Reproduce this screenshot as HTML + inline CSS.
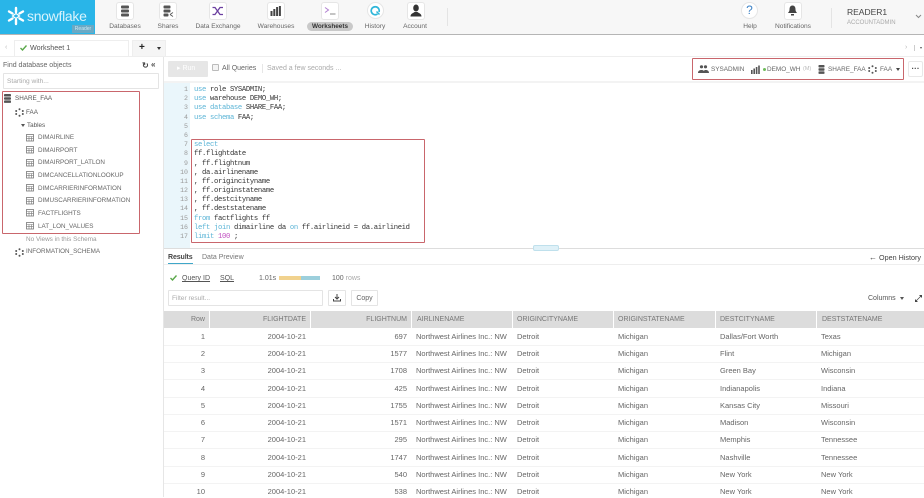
<!DOCTYPE html>
<html><head><meta charset="utf-8">
<style>
*{box-sizing:border-box}
html,body{margin:0;padding:0}
body{width:924px;height:497px;overflow:hidden;position:relative;background:#fff;font-family:"Liberation Sans",sans-serif;color:#555;font-size:7px;filter:blur(.3px)}
.a{position:absolute;white-space:nowrap}
.ico{position:absolute;top:2px;width:18px;height:18px;background:#fff;border-radius:3px;border:1px solid #e6e6e6}
.nl{position:absolute;top:22px;height:9px;line-height:9px;font-size:6.6px;color:#666;text-align:center;white-space:nowrap}
.tr{font-size:6.3px;color:#666;line-height:10px;height:10px}
.code{font-family:"Liberation Mono",monospace;font-size:7.2px;letter-spacing:-.32px;line-height:9.19px;color:#333;white-space:pre}
.k{color:#5bb4d6}
.ln{position:absolute;left:165px;width:23px;text-align:right;font-family:"Liberation Mono",monospace;font-size:6.6px;color:#999;line-height:9.19px}
.cell{position:absolute;font-size:7.5px;color:#666;height:12px;line-height:12px;white-space:nowrap;margin-top:1px}
.hd{position:absolute;top:311px;height:17px;line-height:18px;background:#dcdcdc;font-size:7px;color:#777;padding:0 4px}
.row{position:absolute;left:164px;width:760px;height:1px;background:#f3f3f3}
.red{position:absolute;border:1.5px solid #c9666c;border-radius:1px}
</style></head><body>

<!-- top bar -->
<div class="a" style="left:0;top:0;width:924px;height:35px;background:#f7f7f7;border-bottom:1px solid #b5b5b5"></div>
<div class="a" style="left:0;top:0;width:95px;height:34px;background:#29b5e8"></div>
<svg class="a" style="left:6px;top:6px" width="20" height="20" viewBox="0 0 20 20" stroke="#fff" stroke-width="2.4" stroke-linecap="round" fill="none"><path d="M10 2v4M10 14v4M3 5.5l3.5 2M13.5 12.5l3.5 2M3 14.5l3.5-2M13.5 7.500l3.500-2"/><path d="M6.500 10l3.500-2.500 3.500 2.500-3.500 2.500z" stroke-width="1.200"/></svg>
<div class="a" style="left:27px;top:7px;font-size:14px;letter-spacing:-.3px;line-height:18px;color:#d8f3fc">snowflake</div>
<div class="a" style="left:72px;top:25px;width:22px;height:8px;background:#6aa9c4;color:#cfe8f2;font-size:5px;line-height:8px;text-align:center">Reader</div>

<div class="ico" style="left:116px"></div>
<svg class="a" style="left:120px;top:5px" width="10" height="12" viewBox="0 0 10 12" fill="#555"><rect x="1" y="0.500" width="8" height="3" rx="1"/><rect x="1" y="4.500" width="8" height="3" rx="1"/><rect x="1" y="8.500" width="8" height="3" rx="1"/></svg>
<div class="nl" style="left:105px;width:40px">Databases</div>

<div class="ico" style="left:159px"></div>
<svg class="a" style="left:163px;top:5px" width="11" height="12" viewBox="0 0 11 12" fill="#555"><rect x="0.500" y="0.500" width="7" height="3" rx="1"/><rect x="0.500" y="4.500" width="7" height="3" rx="1"/><rect x="0.500" y="8.500" width="5" height="3" rx="1"/><path d="M7 9.500l3-2M7 9.500l3 2" stroke="#555" stroke-width=".8" fill="none"/></svg>
<div class="nl" style="left:148px;width:40px">Shares</div>

<div class="ico" style="left:209px"></div>
<svg class="a" style="left:212px;top:5px" width="12" height="12" viewBox="0 0 12 12" fill="none" stroke="#6b3fa0" stroke-width="1.300"><path d="M0.500 2.500h2.500l5 7h3M0.500 9.500h2.500l5-7h3"/></svg>
<div class="nl" style="left:188px;width:60px">Data Exchange</div>

<div class="ico" style="left:267px"></div>
<svg class="a" style="left:270px;top:5px" width="12" height="12" viewBox="0 0 12 12" fill="#444"><rect x="0.500" y="6" width="2" height="5"/><rect x="3.300" y="4" width="2" height="7"/><rect x="6.100" y="2" width="2" height="9"/><rect x="8.900" y="1" width="2" height="10"/></svg>
<div class="nl" style="left:250px;width:52px">Warehouses</div>

<div class="ico" style="left:321px"></div>
<svg class="a" style="left:324px;top:6px" width="13" height="11" viewBox="0 0 13 11" fill="none" stroke="#b07fd0" stroke-width="1"><path d="M1 1.500l3.500 2.500-3.500 2.500"/><path d="M6 8h5.500" stroke="#888"/></svg>
<div class="a" style="left:307px;top:22px;width:46px;height:9px;background:#c9c9c9;border-radius:5px"></div>
<div class="nl" style="left:307px;width:46px;color:#333;font-weight:bold;font-size:6.400px">Worksheets</div>

<div class="a" style="left:367px;top:2px;width:17px;height:17px;background:#fff;border:1px solid #e6e6e6;border-radius:50%"></div>
<svg class="a" style="left:370px;top:5px" width="11" height="11" viewBox="0 0 11 11" fill="none" stroke="#2fb6d9" stroke-width="1.700"><path d="M7.500 9a4 4 0 1 1 1.500-2"/><path d="M6.500 6.500l3 3" stroke-width="1.500"/></svg>
<div class="nl" style="left:355px;width:40px">History</div>

<div class="ico" style="left:407px"></div>
<svg class="a" style="left:410px;top:4px" width="12" height="13" viewBox="0 0 12 13" fill="#333"><ellipse cx="6" cy="4" rx="2.800" ry="3.500"/><path d="M0.500 12.500c0-3 3-3.500 4-4.500h3c1 1 4 1.500 4 4.500z"/></svg>
<div class="nl" style="left:395px;width:40px">Account</div>

<div class="a" style="left:447px;top:8px;width:1px;height:18px;background:#e4e4e4"></div>

<div class="a" style="left:741px;top:2px;width:17px;height:17px;background:#fff;border:1px solid #e6e6e6;border-radius:50%;color:#3f83c6;font-size:12px;line-height:15px;text-align:center">?</div>
<div class="nl" style="left:730px;width:40px">Help</div>
<div class="ico" style="left:784px"></div>
<svg class="a" style="left:787px;top:5px" width="11" height="11" viewBox="0 0 11 11" fill="#444"><path d="M5.500 0.500c-2 0-3 1.500-3 4 0 2-1 2.500-1.500 3.500h9c-.5-1-1.500-1.500-1.500-3.500 0-2.500-1-4-3-4z"/><rect x="4" y="9" width="3" height="1.500"/></svg>
<div class="nl" style="left:770px;width:46px">Notifications</div>
<div class="a" style="left:831px;top:8px;width:1px;height:20px;background:#e4e4e4"></div>
<div class="a" style="left:847px;top:7px;font-size:8.500px;line-height:11px;color:#444">READER1</div>
<div class="a" style="left:847px;top:19px;font-size:6px;line-height:8px;color:#aaa">ACCOUNTADMIN</div>
<svg class="a" style="left:915px;top:14px" width="7" height="5" viewBox="0 0 7 5" fill="none" stroke="#888" stroke-width="1"><path d="M1 1l2.500 2.500L6 1"/></svg>

<!-- tabs -->
<div class="a" style="left:5px;top:44px;font-size:7px;color:#bbb">‹</div>
<div class="a" style="left:14px;top:40px;width:115px;height:17px;background:#fff;border:1px solid #eee;border-bottom:0"></div>
<svg class="a" style="left:20px;top:45px" width="7" height="6" viewBox="0 0 7 6" fill="none" stroke="#5aa84a" stroke-width="1.400"><path d="M.5 3l2 2 4-4.500"/></svg>
<div class="a" style="left:30px;top:43px;font-size:7.200px;line-height:10px;color:#555">Worksheet 1</div>
<div class="a" style="left:132px;top:40px;width:34px;height:17px;background:#f5f5f5;border:1px solid #eee"></div>
<div class="a" style="left:139px;top:42px;font-size:10px;line-height:12px;color:#222;font-weight:bold">+</div>
<div class="a" style="left:157px;top:47px;border-left:2px solid transparent;border-right:2px solid transparent;border-top:3px solid #333"></div>
<div class="a" style="left:905px;top:44px;font-size:7px;color:#bbb">›</div>
<div class="a" style="left:914px;top:45px;width:1px;height:6px;background:#ccc"></div>
<div class="a" style="left:920px;top:47px;border-left:1.500px solid transparent;border-right:1.500px solid transparent;border-top:2.500px solid #555"></div>
<div class="a" style="left:0;top:56px;width:924px;height:1px;background:#eee"></div>

<!-- sidebar -->
<div class="a" style="left:3px;top:61px;font-size:7px;line-height:10px;color:#666">Find database objects</div>
<div class="a" style="left:142px;top:60px;font-size:8px;line-height:11px;color:#444;font-weight:bold">↻</div>
<div class="a" style="left:151px;top:60px;font-size:8px;line-height:10px;color:#444;font-weight:bold">«</div>
<div class="a" style="left:3px;top:73px;width:156px;height:16px;border:1px solid #e4e4e4;background:#fff;border-radius:1px;padding-left:3px;font-size:6.600px;line-height:16px;color:#aaa">Starting with...</div>
<div class="a" style="left:163px;top:57px;width:1px;height:440px;background:#e6e6e6"></div>

<svg class="a" style="left:3px;top:94px" width="8" height="9" viewBox="0 0 8 9" fill="#555"><rect x="1" y="0" width="7" height="2.500" rx=".8"/><rect x="1" y="3.200" width="7" height="2.500" rx=".8"/><rect x="1" y="6.400" width="7" height="2.500" rx=".8"/></svg>
<div class="a tr" style="left:15px;top:94px;color:#555">SHARE_FAA</div>
<svg class="a" style="left:15px;top:108px" width="9" height="9" viewBox="0 0 9 9" fill="#555"><circle cx="4.500" cy="1.200" r="1"/><circle cx="4.500" cy="7.800" r="1"/><circle cx="1.200" cy="3" r="1"/><circle cx="7.800" cy="3" r="1"/><circle cx="1.200" cy="6" r="1"/><circle cx="7.800" cy="6" r="1"/></svg>
<div class="a tr" style="left:26px;top:108px;color:#555">FAA</div>
<div class="a" style="left:21px;top:124px;border-left:2px solid transparent;border-right:2px solid transparent;border-top:3px solid #555"></div>
<div class="a tr" style="left:27px;top:121px;color:#555">Tables</div>

<svg width="0" height="0" style="position:absolute"><defs><g id="tb"><rect x=".5" y=".5" width="7" height="6.500" fill="none" stroke="#777" stroke-width=".8"/><path d="M.5 2.500h7M.5 4.700h7M3 2.500v4.500M5.300 2.500v4.500" stroke="#777" stroke-width=".6"/></g></defs></svg>
<svg class="a" style="left:26px;top:134px" width="8" height="8"><use href="#tb"/></svg><div class="a tr" style="left:38px;top:133px">DIMAIRLINE</div>
<svg class="a" style="left:26px;top:146px" width="8" height="8"><use href="#tb"/></svg><div class="a tr" style="left:38px;top:146px">DIMAIRPORT</div>
<svg class="a" style="left:26px;top:159px" width="8" height="8"><use href="#tb"/></svg><div class="a tr" style="left:38px;top:158px">DIMAIRPORT_LATLON</div>
<svg class="a" style="left:26px;top:171px" width="8" height="8"><use href="#tb"/></svg><div class="a tr" style="left:38px;top:171px">DIMCANCELLATIONLOOKUP</div>
<svg class="a" style="left:26px;top:184px" width="8" height="8"><use href="#tb"/></svg><div class="a tr" style="left:38px;top:184px">DIMCARRIERINFORMATION</div>
<svg class="a" style="left:26px;top:197px" width="8" height="8"><use href="#tb"/></svg><div class="a tr" style="left:38px;top:196px">DIMUSCARRIERINFORMATION</div>
<svg class="a" style="left:26px;top:209px" width="8" height="8"><use href="#tb"/></svg><div class="a tr" style="left:38px;top:209px">FACTFLIGHTS</div>
<svg class="a" style="left:26px;top:222px" width="9" height="8"><use href="#tb"/></svg><div class="a tr" style="left:38px;top:222px">LAT_LON_VALUES</div>
<div class="a tr" style="left:26px;top:235px;color:#999;font-size:6.400px">No Views in this Schema</div>
<svg class="a" style="left:15px;top:248px" width="9" height="9" viewBox="0 0 9 9" fill="#555"><circle cx="4.500" cy="1.200" r="1"/><circle cx="4.500" cy="7.800" r="1"/><circle cx="1.200" cy="3" r="1"/><circle cx="7.800" cy="3" r="1"/><circle cx="1.200" cy="6" r="1"/><circle cx="7.800" cy="6" r="1"/></svg>
<div class="a tr" style="left:26px;top:247px">INFORMATION_SCHEMA</div>
<div class="red" style="left:2px;top:91px;width:138px;height:143px"></div>

<!-- toolbar -->
<div class="a" style="left:168px;top:61px;width:40px;height:16px;background:#e6e6e6;border-radius:1px;color:#fff;font-size:7px;line-height:16px;padding-left:9px">▸&nbsp;Run</div>
<div class="a" style="left:212px;top:64px;width:7px;height:7px;border:1px solid #bbb;border-radius:1px;background:#f4f4f4"></div>
<div class="a" style="left:222px;top:64px;font-size:7px;line-height:10px;color:#666">All Queries</div>
<div class="a" style="left:262px;top:64px;width:1px;height:9px;background:#e6e6e6"></div>
<div class="a" style="left:267px;top:64px;font-size:7px;line-height:10px;color:#aaa">Saved a few seconds ...</div>

<svg class="a" style="left:698px;top:65px" width="11" height="8" viewBox="0 0 11 8" fill="#555"><circle cx="3.500" cy="1.800" r="1.600"/><circle cx="7.500" cy="1.800" r="1.600"/><path d="M0 8c0-2.500 2-3 3.500-3s3 .5 3 3zM6 8c0-2-.2-3 1.500-3 2 0 3.500 .8 3.500 3z"/></svg>
<div class="a" style="left:711px;top:65px;font-size:6.400px;line-height:9px;color:#666">SYSADMIN</div>
<svg class="a" style="left:751px;top:65px" width="9" height="9" viewBox="0 0 9 9" fill="#555"><rect x="0" y="5" width="1.600" height="4"/><rect x="2.400" y="3.500" width="1.600" height="5.500"/><rect x="4.800" y="2" width="1.600" height="7"/><rect x="7.200" y="0.500" width="1.600" height="8.500"/></svg>
<div class="a" style="left:763px;top:68px;width:3px;height:3px;border-radius:50%;background:#6dbb5a"></div>
<div class="a" style="left:767px;top:65px;font-size:6.400px;line-height:9px;color:#666">DEMO_WH</div>
<div class="a" style="left:803px;top:65px;font-size:5.500px;line-height:9px;color:#bbb">(M)</div>
<svg class="a" style="left:818px;top:65px" width="7" height="9" viewBox="0 0 7 9" fill="#555"><rect x="0.500" y="0" width="6" height="2.500" rx=".7"/><rect x="0.500" y="3.200" width="6" height="2.500" rx=".7"/><rect x="0.500" y="6.400" width="6" height="2.500" rx=".7"/></svg>
<div class="a" style="left:828px;top:65px;font-size:6.400px;line-height:9px;color:#666">SHARE_FAA</div>
<svg class="a" style="left:868px;top:65px" width="9" height="9" viewBox="0 0 9 9" fill="#555"><circle cx="4.500" cy="1.200" r="1"/><circle cx="4.500" cy="7.800" r="1"/><circle cx="1.200" cy="3" r="1"/><circle cx="7.800" cy="3" r="1"/><circle cx="1.200" cy="6" r="1"/><circle cx="7.800" cy="6" r="1"/></svg>
<div class="a" style="left:880px;top:65px;font-size:6.400px;line-height:9px;color:#666">FAA</div>
<div class="a" style="left:896px;top:68px;border-left:2px solid transparent;border-right:2px solid transparent;border-top:3px solid #444"></div>
<div class="red" style="left:692px;top:58px;width:212px;height:22px"></div>
<div class="a" style="left:908px;top:61px;width:15px;height:16px;background:#fff;border:1px solid #e8e8e8;border-radius:2px;font-size:8px;line-height:14px;text-align:center;color:#444;font-weight:bold">···</div>
<div class="a" style="left:164px;top:81px;width:760px;height:2px;background:#f3f3f3"></div>

<!-- editor -->
<div class="a" style="left:164px;top:83px;width:26px;height:165px;background:#eaf6fb"></div>
<div class="ln" style="top:85px">1<br>2<br>3<br>4<br>5<br>6<br>7<br>8<br>9<br>10<br>11<br>12<br>13<br>14<br>15<br>16<br>17</div>
<div class="a code" style="left:194px;top:86px"><span class="k">use</span> role SYSADMIN;
<span class="k">use</span> warehouse DEMO_WH;
<span class="k">use database</span> SHARE_FAA;
<span class="k">use schema</span> FAA;


<span class="k">select</span>
ff.flightdate
, ff.flightnum
, da.airlinename
, ff.origincityname
, ff.originstatename
, ff.destcityname
, ff.deststatename
<span class="k">from</span> factflights ff
<span class="k">left join</span> dimairline da <span class="k">on</span> ff.airlineid = da.airlineid
<span class="k">limit</span> <span style="color:#c04fc0">100</span> ;</div>
<div class="red" style="left:191px;top:139px;width:234px;height:104px"></div>
<div class="a" style="left:164px;top:248px;width:760px;height:1px;background:#ddd"></div>
<div class="a" style="left:533px;top:245px;width:26px;height:6px;background:#dff1f8;border:1px solid #bfe0ec;border-radius:2px"></div>

<!-- results -->
<div class="a" style="left:168px;top:253px;font-size:7px;line-height:10px;color:#444;font-weight:bold;letter-spacing:-.1px">Results</div>
<div class="a" style="left:168px;top:263px;width:25px;height:2px;background:#3fa7c9"></div>
<div class="a" style="left:202px;top:253px;font-size:7px;line-height:10px;color:#777">Data Preview</div>
<div class="a" style="left:164px;top:264px;width:760px;height:1px;background:#eee"></div>
<div class="a" style="left:869px;top:253px;font-size:8px;line-height:10px;color:#444">←</div>
<div class="a" style="left:879px;top:253px;font-size:7.200px;line-height:10px;color:#444">Open History</div>

<svg class="a" style="left:170px;top:275px" width="7" height="6" viewBox="0 0 7 6" fill="none" stroke="#5aa84a" stroke-width="1.400"><path d="M.5 3l2 2 4-4.500"/></svg>
<div class="a" style="left:182px;top:274px;font-size:7px;line-height:10px;color:#555;text-decoration:underline">Query ID</div>
<div class="a" style="left:220px;top:274px;font-size:7px;line-height:10px;color:#555;text-decoration:underline">SQL</div>
<div class="a" style="left:259px;top:274px;font-size:7px;line-height:10px;color:#666">1.01s</div>
<div class="a" style="left:279px;top:276px;width:22px;height:4px;background:#f1d28e"></div>
<div class="a" style="left:301px;top:276px;width:19px;height:4px;background:#9ccfdc"></div>
<div class="a" style="left:332px;top:274px;font-size:7px;line-height:10px;color:#666">100 <span style="color:#aaa">rows</span></div>

<div class="a" style="left:168px;top:290px;width:155px;height:16px;border:1px solid #e4e4e4;border-radius:1px;padding-left:3px;font-size:6.600px;line-height:15px;color:#aaa">Filter result...</div>
<div class="a" style="left:328px;top:290px;width:18px;height:16px;border:1px solid #e4e4e4;border-radius:1px"></div>
<svg class="a" style="left:333px;top:294px" width="8" height="8" viewBox="0 0 8 8" fill="none" stroke="#444" stroke-width="1"><path d="M4 0v4.500M2 3l2 2 2-2M.5 5v2h7V5"/></svg>
<div class="a" style="left:351px;top:290px;width:27px;height:16px;border:1px solid #e4e4e4;border-radius:1px;text-align:center;font-size:7px;line-height:15px;color:#666">Copy</div>
<div class="a" style="left:868px;top:292px;font-size:7px;line-height:14px;color:#555">Columns</div>
<div class="a" style="left:900px;top:297px;border-left:2px solid transparent;border-right:2px solid transparent;border-top:3px solid #555"></div>
<svg class="a" style="left:915px;top:295px" width="7" height="7" viewBox="0 0 7 7" fill="#444"><path d="M4 0h3v3zM0 4v3h3z"/><path d="M1 6l5-5" stroke="#444" stroke-width=".7"/></svg>

<!-- table header -->
<div class="hd" style="left:164px;width:45px;text-align:right">Row</div>
<div class="hd" style="left:210px;width:100px;text-align:right">FLIGHTDATE</div>
<div class="hd" style="left:311px;width:100px;text-align:right">FLIGHTNUM</div>
<div class="hd" style="left:412px;width:100px;padding-left:5px">AIRLINENAME</div>
<div class="hd" style="left:513px;width:100px">ORIGINCITYNAME</div>
<div class="hd" style="left:614px;width:101px">ORIGINSTATENAME</div>
<div class="hd" style="left:716px;width:100px">DESTCITYNAME</div>
<div class="hd" style="left:817px;width:107px;padding-left:5px">DESTSTATENAME</div>

<!-- rows -->
<div class="row" style="top:345px"></div><div class="row" style="top:362px"></div><div class="row" style="top:379px"></div><div class="row" style="top:397px"></div><div class="row" style="top:414px"></div><div class="row" style="top:431px"></div><div class="row" style="top:448px"></div><div class="row" style="top:466px"></div><div class="row" style="top:483px"></div>

<div class="cell" style="left:180px;width:25px;text-align:right;top:330px">1</div><div class="cell" style="left:250px;width:56px;text-align:right;top:330px">2004-10-21</div><div class="cell" style="left:360px;width:47px;text-align:right;top:330px">697</div><div class="cell" style="left:416px;top:330px">Northwest Airlines Inc.: NW</div><div class="cell" style="left:517px;top:330px">Detroit</div><div class="cell" style="left:618px;top:330px">Michigan</div><div class="cell" style="left:720px;top:330px">Dallas/Fort Worth</div><div class="cell" style="left:821px;top:330px">Texas</div>

<div class="cell" style="left:180px;width:25px;text-align:right;top:347px">2</div><div class="cell" style="left:250px;width:56px;text-align:right;top:347px">2004-10-21</div><div class="cell" style="left:360px;width:47px;text-align:right;top:347px">1577</div><div class="cell" style="left:416px;top:347px">Northwest Airlines Inc.: NW</div><div class="cell" style="left:517px;top:347px">Detroit</div><div class="cell" style="left:618px;top:347px">Michigan</div><div class="cell" style="left:720px;top:347px">Flint</div><div class="cell" style="left:821px;top:347px">Michigan</div>

<div class="cell" style="left:180px;width:25px;text-align:right;top:364px">3</div><div class="cell" style="left:250px;width:56px;text-align:right;top:364px">2004-10-21</div><div class="cell" style="left:360px;width:47px;text-align:right;top:364px">1708</div><div class="cell" style="left:416px;top:364px">Northwest Airlines Inc.: NW</div><div class="cell" style="left:517px;top:364px">Detroit</div><div class="cell" style="left:618px;top:364px">Michigan</div><div class="cell" style="left:720px;top:364px">Green Bay</div><div class="cell" style="left:821px;top:364px">Wisconsin</div>

<div class="cell" style="left:180px;width:25px;text-align:right;top:382px">4</div><div class="cell" style="left:250px;width:56px;text-align:right;top:382px">2004-10-21</div><div class="cell" style="left:360px;width:47px;text-align:right;top:382px">425</div><div class="cell" style="left:416px;top:382px">Northwest Airlines Inc.: NW</div><div class="cell" style="left:517px;top:382px">Detroit</div><div class="cell" style="left:618px;top:382px">Michigan</div><div class="cell" style="left:720px;top:382px">Indianapolis</div><div class="cell" style="left:821px;top:382px">Indiana</div>

<div class="cell" style="left:180px;width:25px;text-align:right;top:399px">5</div><div class="cell" style="left:250px;width:56px;text-align:right;top:399px">2004-10-21</div><div class="cell" style="left:360px;width:47px;text-align:right;top:399px">1755</div><div class="cell" style="left:416px;top:399px">Northwest Airlines Inc.: NW</div><div class="cell" style="left:517px;top:399px">Detroit</div><div class="cell" style="left:618px;top:399px">Michigan</div><div class="cell" style="left:720px;top:399px">Kansas City</div><div class="cell" style="left:821px;top:399px">Missouri</div>

<div class="cell" style="left:180px;width:25px;text-align:right;top:416px">6</div><div class="cell" style="left:250px;width:56px;text-align:right;top:416px">2004-10-21</div><div class="cell" style="left:360px;width:47px;text-align:right;top:416px">1571</div><div class="cell" style="left:416px;top:416px">Northwest Airlines Inc.: NW</div><div class="cell" style="left:517px;top:416px">Detroit</div><div class="cell" style="left:618px;top:416px">Michigan</div><div class="cell" style="left:720px;top:416px">Madison</div><div class="cell" style="left:821px;top:416px">Wisconsin</div>

<div class="cell" style="left:180px;width:25px;text-align:right;top:433px">7</div><div class="cell" style="left:250px;width:56px;text-align:right;top:433px">2004-10-21</div><div class="cell" style="left:360px;width:47px;text-align:right;top:433px">295</div><div class="cell" style="left:416px;top:433px">Northwest Airlines Inc.: NW</div><div class="cell" style="left:517px;top:433px">Detroit</div><div class="cell" style="left:618px;top:433px">Michigan</div><div class="cell" style="left:720px;top:433px">Memphis</div><div class="cell" style="left:821px;top:433px">Tennessee</div>

<div class="cell" style="left:180px;width:25px;text-align:right;top:451px">8</div><div class="cell" style="left:250px;width:56px;text-align:right;top:451px">2004-10-21</div><div class="cell" style="left:360px;width:47px;text-align:right;top:451px">1747</div><div class="cell" style="left:416px;top:451px">Northwest Airlines Inc.: NW</div><div class="cell" style="left:517px;top:451px">Detroit</div><div class="cell" style="left:618px;top:451px">Michigan</div><div class="cell" style="left:720px;top:451px">Nashville</div><div class="cell" style="left:821px;top:451px">Tennessee</div>

<div class="cell" style="left:180px;width:25px;text-align:right;top:468px">9</div><div class="cell" style="left:250px;width:56px;text-align:right;top:468px">2004-10-21</div><div class="cell" style="left:360px;width:47px;text-align:right;top:468px">540</div><div class="cell" style="left:416px;top:468px">Northwest Airlines Inc.: NW</div><div class="cell" style="left:517px;top:468px">Detroit</div><div class="cell" style="left:618px;top:468px">Michigan</div><div class="cell" style="left:720px;top:468px">New York</div><div class="cell" style="left:821px;top:468px">New York</div>

<div class="cell" style="left:180px;width:25px;text-align:right;top:485px">10</div><div class="cell" style="left:250px;width:56px;text-align:right;top:485px">2004-10-21</div><div class="cell" style="left:360px;width:47px;text-align:right;top:485px">538</div><div class="cell" style="left:416px;top:485px">Northwest Airlines Inc.: NW</div><div class="cell" style="left:517px;top:485px">Detroit</div><div class="cell" style="left:618px;top:485px">Michigan</div><div class="cell" style="left:720px;top:485px">New York</div><div class="cell" style="left:821px;top:485px">New York</div>

</body></html>
